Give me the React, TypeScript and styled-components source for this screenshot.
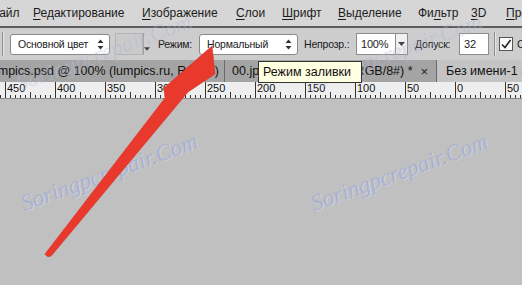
import styled, { createGlobalStyle } from "styled-components";

const GlobalStyle = createGlobalStyle`
  body {
    margin: 0;
    background: #c0c0c0;
    overflow: hidden;
  }
`;

const menu = [
  { pre: "Ф", u: "", post: "айл", w: 43, first: true },
  { pre: "", u: "Р", post: "едактирование", w: 109 },
  { pre: "", u: "И", post: "зображение", w: 94 },
  { pre: "", u: "С", post: "лои", w: 46 },
  { pre: "", u: "Ш", post: "рифт", w: 56 },
  { pre: "", u: "В", post: "ыделение", w: 80 },
  { pre: "Фи", u: "л", post: "ьтр", w: 53 },
  { pre: "", u: "3", post: "D", w: 35 },
  { pre: "", u: "П", post: "росмотр", w: 80 },
];

const ticks = Array.from({ length: 120 }, (_, i) => i * 5);
const rulerLabels = ["450", "400", "350", "300", "250", "200", "150", "100", "50", "0", "50"];

export default function App(): JSX.Element {
  return (
    <Frame>
      <GlobalStyle />
      <MenuBar>
        {menu.map((m) => (
          <MenuItem key={m.post} $w={m.w} $first={m.first}>
            {m.pre}
            {m.u && <u>{m.u}</u>}
            {m.post}
          </MenuItem>
        ))}
      </MenuBar>

      <OptionsBar>
        <Separator $ml={2} />
        <Select $ml={6} $w={100}>
          Основной цвет
          <Spinner />
        </Select>
        <Swatch>
          <SwatchColor />
          <SwatchArrow>
            <Caret />
          </SwatchArrow>
        </Swatch>
        <Label $ml={8} $w={41}>Режим:</Label>
        <Select $ml={0} $w={99}>
          Нормальный
          <Spinner />
        </Select>
        <Label $ml={6} $w={52}>Непрозр.:</Label>
        <Field $w={40}>100%</Field>
        <FieldButton>
          <Caret />
        </FieldButton>
        <Label $ml={7} $w={44}>Допуск:</Label>
        <Field $w={30}>32</Field>
        <Separator $ml={5} />
        <CheckBox>
          <svg width="12" height="12" viewBox="0 0 12 12">
            <path d="M2 6.5 L5 9.5 L10.5 2" fill="none" stroke="#222" strokeWidth="1.6" />
          </svg>
        </CheckBox>
        <Label $ml={4} $w={40}>Сглаживание</Label>
      </OptionsBar>

      <TabBar>
        <Tab $w={225} $indent={-12}>
          lumpics.psd @ 100% (lumpics.ru, RGB/8)
          <Close>×</Close>
        </Tab>
        <Tab $w={212} $indent={7}>
          00.jpg @ 100% (Фон, RGB/8#) *
          <Close>×</Close>
        </Tab>
        <Tab $w={120} $indent={9} $active>
          Без имени-1 @ 100% (RGB/8)
        </Tab>
      </TabBar>

      <Ruler>
        <svg width="522" height="16" viewBox="0 0 522 16">
          {ticks.map((t) => {
            const x = t + 5.5 - 50;
            const step = ((t % 50) + 50) % 50;
            const h = step === 0 ? 16 : step === 25 ? 6 : 3;
            return <line key={t} x1={x} x2={x} y1={16 - h} y2={16} stroke="#333" strokeWidth="1" />;
          })}
          {rulerLabels.map((l, i) => (
            <text key={i} x={7 + i * 50} y={10} fontSize="11" fontFamily="'Liberation Sans', Arial, sans-serif" fill="#111">
              {l}
            </text>
          ))}
        </svg>
      </Ruler>

      <Canvas />

      <Watermark $x={20} $y={96} $faint>Soringpcrepair.Com</Watermark>
      <Watermark $x={310} $y={96} $faint>Soringpcrepair.Com</Watermark>
      <Watermark $x={26} $y={216}>Soringpcrepair.Com</Watermark>
      <Watermark $x={316} $y={216}>Soringpcrepair.Com</Watermark>

      <Tooltip>Режим заливки</Tooltip>

      <ArrowLayer width="522" height="285" viewBox="0 0 522 285">
        <path
          d="M212 46 L215 74 L188 92 L52 255 Q48 259 45 254 L165 98 L164 88 Z"
          fill="#e8392c"
          stroke="#d83226"
          strokeWidth="0.6"
          strokeLinejoin="round"
        />
      </ArrowLayer>
    </Frame>
  );
}

function Spinner(): JSX.Element {
  return (
    <SpinIcon width="7" height="11" viewBox="0 0 7 11">
      <path d="M3.5 0.5 L6.5 4 L0.5 4 Z" fill="#333" />
      <path d="M3.5 10.5 L6.5 7 L0.5 7 Z" fill="#333" />
    </SpinIcon>
  );
}

function Caret(): JSX.Element {
  return (
    <svg width="7" height="4" viewBox="0 0 7 4">
      <path d="M0 0 L7 0 L3.5 4 Z" fill="#444" />
    </svg>
  );
}

const Frame = styled.div`
  position: relative;
  width: 522px;
  height: 285px;
  overflow: hidden;
  display: flex;
  flex-direction: column;
  background: #c0c0c0;
  font-family: "Liberation Sans", Arial, sans-serif;
  color: #1b1b1b;
`;

const MenuBar = styled.div`
  height: 26px;
  flex-shrink: 0;
  display: flex;
  align-items: center;
  background: #d6d6d6;
  border-bottom: 2px solid #5c5c5c;
  font-size: 12px;
  white-space: nowrap;
`;

const MenuItem = styled.div<{ $w: number; $first?: boolean }>`
  flex-shrink: 0;
  width: ${(p) => p.$w}px;
  margin-left: ${(p) => (p.$first ? "-10px" : "0")};
  u {
    text-underline-offset: 2px;
  }
`;

const OptionsBar = styled.div`
  height: 32px;
  flex-shrink: 0;
  display: flex;
  align-items: center;
  background: #cdcdcd;
  font-size: 10.5px;
  letter-spacing: -0.2px;
  white-space: nowrap;
`;

const Separator = styled.div<{ $ml: number }>`
  flex-shrink: 0;
  margin-left: ${(p) => p.$ml}px;
  width: 1px;
  height: 24px;
  background: #8e8e8e;
  border-right: 1px solid #e6e6e6;
`;

const Select = styled.div<{ $ml: number; $w: number }>`
  flex-shrink: 0;
  position: relative;
  box-sizing: border-box;
  margin-left: ${(p) => p.$ml}px;
  width: ${(p) => p.$w}px;
  height: 21px;
  display: flex;
  align-items: center;
  padding-left: 7px;
  background: #ffffff;
  border: 1px solid #8a8a8a;
  border-radius: 3px;
`;

const SpinIcon = styled.svg`
  position: absolute;
  right: 5px;
  top: 4px;
`;

const Swatch = styled.div`
  flex-shrink: 0;
  margin-left: 5px;
  display: flex;
  height: 22px;
`;

const SwatchColor = styled.div`
  width: 28px;
  box-sizing: border-box;
  background: #cacaca;
  border: 1px solid #b4b4b4;
`;

const SwatchArrow = styled.div`
  width: 7px;
  display: flex;
  align-items: flex-end;
  padding-bottom: 4px;
  box-sizing: border-box;
  border-left: 1px solid #a0a0a0;
`;

const Label = styled.div<{ $ml: number; $w: number }>`
  flex-shrink: 0;
  margin-left: ${(p) => p.$ml}px;
  width: ${(p) => p.$w}px;
`;

const Field = styled.div<{ $w: number }>`
  flex-shrink: 0;
  box-sizing: border-box;
  width: ${(p) => p.$w}px;
  height: 22px;
  display: flex;
  align-items: center;
  padding-left: 4px;
  background: #ffffff;
  border: 1px solid #8c8c8c;
  font-size: 11px;
`;

const FieldButton = styled.div`
  flex-shrink: 0;
  box-sizing: border-box;
  width: 12px;
  height: 22px;
  display: flex;
  align-items: center;
  justify-content: center;
  background: #f0f0f0;
  border: 1px solid #8c8c8c;
  border-left: none;
`;

const CheckBox = styled.div`
  flex-shrink: 0;
  box-sizing: border-box;
  margin-left: 3px;
  width: 14px;
  height: 14px;
  display: flex;
  align-items: center;
  justify-content: center;
  background: #fafafa;
  border: 1px solid #555;
`;

const TabBar = styled.div`
  height: 22px;
  flex-shrink: 0;
  display: flex;
  background: #a4a4a4;
  font-size: 12.5px;
  white-space: nowrap;
`;

const Tab = styled.div<{ $w: number; $indent: number; $active?: boolean }>`
  flex-shrink: 0;
  box-sizing: border-box;
  width: ${(p) => p.$w - Math.min(p.$indent, 0)}px;
  display: flex;
  align-items: center;
  padding-left: ${(p) => Math.max(p.$indent, 0)}px;
  margin-left: ${(p) => Math.min(p.$indent, 0)}px;
  background: ${(p) => (p.$active ? "#c4c4c4" : "#a4a4a4")};
  border-right: 1px solid #6a6a6a;
  overflow: hidden;
  color: #111;
`;

const Close = styled.span`
  margin-left: auto;
  margin-right: 8px;
  padding-left: 6px;
  font-size: 13px;
  color: #222;
`;

const Ruler = styled.div`
  height: 16px;
  flex-shrink: 0;
  background: #eeeeee;
  border-bottom: 1px solid #8a8a8a;
  svg {
    display: block;
  }
`;

const Canvas = styled.div`
  flex: 1;
  background: #c0c0c0;
`;

const Watermark = styled.span<{ $x: number; $y: number; $faint?: boolean }>`
  position: absolute;
  left: ${(p) => p.$x}px;
  top: ${(p) => p.$y - 24}px;
  transform: rotate(-20deg);
  transform-origin: left bottom;
  font-family: "Liberation Serif", "DejaVu Serif", serif;
  font-style: italic;
  font-size: 23px;
  line-height: 24px;
  color: #a7b0d0;
  opacity: ${(p) => (p.$faint ? 0.3 : 0.9)};
  text-shadow: 1px 1px 0 #d0d4e2;
  pointer-events: none;
  white-space: nowrap;
`;

const Tooltip = styled.div`
  position: absolute;
  left: 258px;
  top: 61px;
  box-sizing: border-box;
  width: 104px;
  height: 22px;
  display: flex;
  align-items: center;
  padding-left: 4px;
  background: #ffffe1;
  border: 1px solid #333;
  font-size: 12.5px;
  color: #111;
  white-space: nowrap;
`;

const ArrowLayer = styled.svg`
  position: absolute;
  left: 0;
  top: 0;
  pointer-events: none;
`;
